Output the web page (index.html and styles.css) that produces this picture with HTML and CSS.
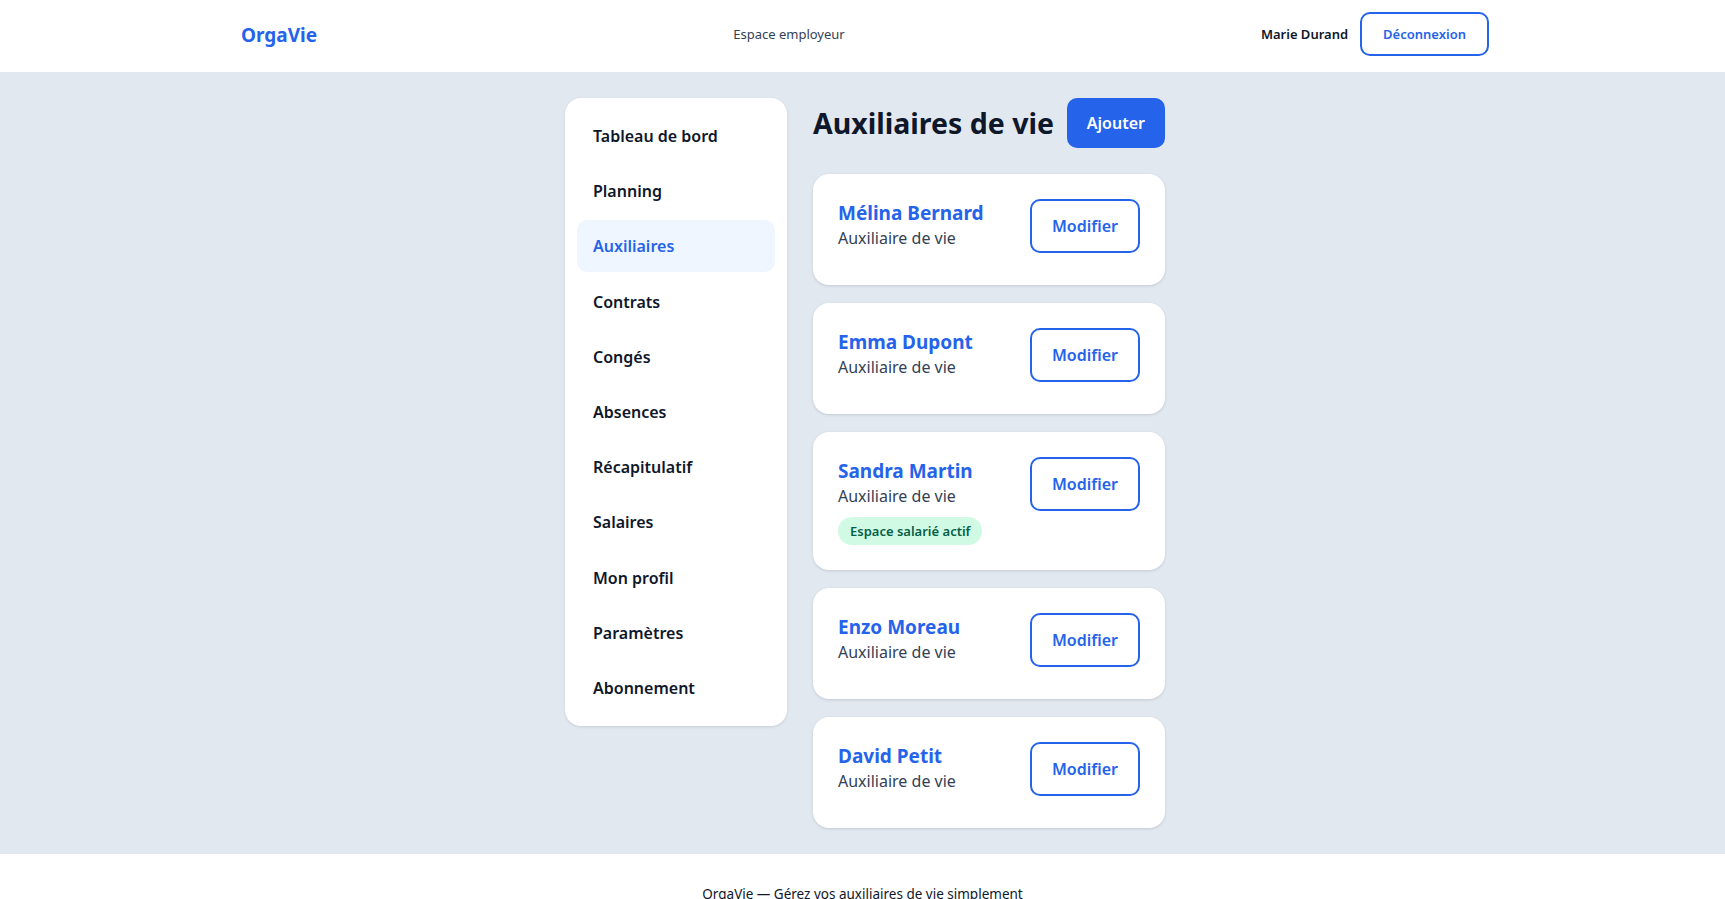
FILE: index.html
```html
<!DOCTYPE html>
<html lang="fr">

<head>
    <meta charset="UTF-8">
    <meta name="viewport" content="width=device-width, initial-scale=1.0">
    <title>OrgaVie - Auxiliaires de vie</title>
    <link rel="stylesheet" href="styles.css">
</head>

<body>

    <header class="topbar">
        <div class="topbar-inner">
            <a class="logo" href="#">OrgaVie</a>
            <span class="space-label">Espace employeur</span>
            <div class="user-box">
                <span class="user-name">Marie Durand</span>
                <button class="btn-outline btn-small" type="button">Déconnexion</button>
            </div>
        </div>
    </header>

    <main class="page">
        <nav class="sidebar">
            <a class="nav-item" href="#">Tableau de bord</a>
            <a class="nav-item" href="#">Planning</a>
            <a class="nav-item active" href="#">Auxiliaires</a>
            <a class="nav-item" href="#">Contrats</a>
            <a class="nav-item" href="#">Congés</a>
            <a class="nav-item" href="#">Absences</a>
            <a class="nav-item" href="#">Récapitulatif</a>
            <a class="nav-item" href="#">Salaires</a>
            <a class="nav-item" href="#">Mon profil</a>
            <a class="nav-item" href="#">Paramètres</a>
            <a class="nav-item" href="#">Abonnement</a>
        </nav>

        <section class="content">
            <div class="content-head">
                <h1>Auxiliaires de vie</h1>
                <button class="btn-primary" type="button">Ajouter</button>
            </div>

            <div class="aux-list">
                <div class="aux-card">
                    <div class="aux-info">
                        <a class="aux-name" href="#">Mélina Bernard</a>
                        <p class="aux-role">Auxiliaire de vie</p>
                    </div>
                    <button class="btn-outline" type="button">Modifier</button>
                </div>

                <div class="aux-card">
                    <div class="aux-info">
                        <a class="aux-name" href="#">Emma Dupont</a>
                        <p class="aux-role">Auxiliaire de vie</p>
                    </div>
                    <button class="btn-outline" type="button">Modifier</button>
                </div>

                <div class="aux-card">
                    <div class="aux-info">
                        <a class="aux-name" href="#">Sandra Martin</a>
                        <p class="aux-role">Auxiliaire de vie</p>
                        <span class="badge">Espace salarié actif</span>
                    </div>
                    <button class="btn-outline" type="button">Modifier</button>
                </div>

                <div class="aux-card">
                    <div class="aux-info">
                        <a class="aux-name" href="#">Enzo Moreau</a>
                        <p class="aux-role">Auxiliaire de vie</p>
                    </div>
                    <button class="btn-outline" type="button">Modifier</button>
                </div>

                <div class="aux-card">
                    <div class="aux-info">
                        <a class="aux-name" href="#">David Petit</a>
                        <p class="aux-role">Auxiliaire de vie</p>
                    </div>
                    <button class="btn-outline" type="button">Modifier</button>
                </div>
            </div>
        </section>
    </main>

    <footer class="footer">
        <p>OrgaVie — Gérez vos auxiliaires de vie simplement</p>
    </footer>

</body>

</html>
```

FILE: styles.css
```css
* {
    box-sizing: border-box;
}

body {
    margin: 0;
    font-family: 'Noto Sans', 'Open Sans', sans-serif;
    color: #0f172a;
    background: #ffffff;
}

a {
    text-decoration: none;
}

button {
    font-family: inherit;
    cursor: pointer;
}

/* Barre du haut */
.topbar {
    background: #ffffff;
    height: 72px;
    padding-left: 5px;
}

.topbar-inner {
    max-width: 1248px;
    height: 100%;
    margin: 0 auto;
    display: flex;
    align-items: center;
    justify-content: space-between;
}

.logo {
    color: #2563eb;
    font-size: 19px;
    font-weight: 700;
    margin-top: -3px;
}

.space-label {
    color: #334155;
    font-size: 13px;
    margin-top: -4px;
}

.user-box {
    display: flex;
    align-items: center;
    gap: 12px;
    margin-top: -4px;
}

.user-name {
    font-size: 13px;
    font-weight: 600;
}

/* Boutons */
.btn-outline {
    flex-shrink: 0;
    background: #ffffff;
    color: #2563eb;
    border: 2px solid #2563eb;
    border-radius: 10px;
    font-size: 16px;
    font-weight: 600;
    line-height: 22px;
    padding: 14px 20px;
}

.btn-small {
    font-size: 13px;
    line-height: 20px;
    padding: 10px 21px;
}

.btn-primary {
    flex-shrink: 0;
    background: #2563eb;
    color: #ffffff;
    border: none;
    border-radius: 10px;
    font-size: 16px;
    font-weight: 600;
    line-height: 22px;
    padding: 14px 20px;
}

/* Zone principale */
.page {
    background: #e2e8f0;
    display: flex;
    justify-content: center;
    align-items: flex-start;
    gap: 26px;
    padding: 26px 0 26px 5px;
}

.sidebar {
    width: 222px;
    background: #ffffff;
    border-radius: 16px;
    padding: 12px;
    display: flex;
    flex-direction: column;
    gap: 3.2px;
    box-shadow: 0 1px 3px rgba(15, 23, 42, 0.12);
}

.nav-item {
    display: block;
    padding: 14px 16px;
    line-height: 24px;
    border-radius: 10px;
    color: #0f172a;
    font-size: 16px;
    font-weight: 600;
}

.nav-item.active {
    background: #eff6ff;
    color: #2563eb;
}

.content {
    width: 352px;
}

.content-head {
    display: flex;
    align-items: center;
    justify-content: space-between;
    gap: 12px;
    margin-bottom: 26px;
}

.content-head h1 {
    margin: 0;
    font-size: 28.5px;
    font-weight: 700;
    line-height: 36px;
    white-space: nowrap;
}

.aux-list {
    display: flex;
    flex-direction: column;
    gap: 18px;
}

.aux-card {
    background: #ffffff;
    border-radius: 16px;
    padding: 25px;
    display: flex;
    justify-content: space-between;
    align-items: flex-start;
    box-shadow: 0 1px 3px rgba(15, 23, 42, 0.14);
}

.aux-info {
    display: flex;
    flex-direction: column;
    align-items: flex-start;
}

.aux-name {
    color: #2563eb;
    font-size: 19px;
    font-weight: 700;
    line-height: 28px;
}

.aux-role {
    margin: 0 0 11px;
    color: #334155;
    font-size: 16px;
    line-height: 22px;
}

.badge {
    margin-top: -1px;
    background: #d1fae5;
    color: #065f46;
    border-radius: 999px;
    padding: 0 12px;
    font-size: 13px;
    font-weight: 600;
    line-height: 28px;
}

/* Pied de page */
.footer {
    background: #ffffff;
    text-align: center;
    padding: 30px 0;
}

.footer p {
    margin: 0;
    font-size: 13.5px;
    line-height: 20px;
    color: #0f172a;
}
```
